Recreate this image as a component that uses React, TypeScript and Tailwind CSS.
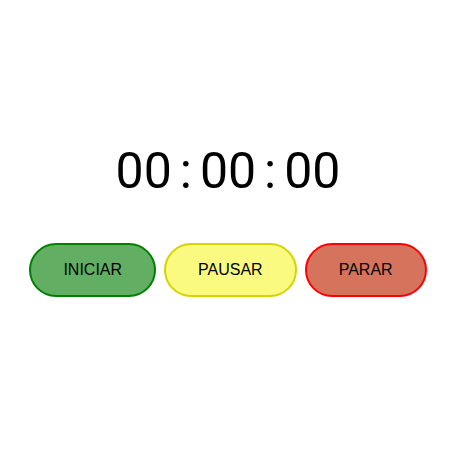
export default function App() {
  return (
    <div className="w-[450px] h-[450px] bg-white pt-[143px] pl-[6px]">
      <div
        className="flex justify-center gap-[8px] text-[50px] leading-[56px] text-black"
        style={{ fontFamily: 'Roboto, sans-serif' }}
      >
        <span>00</span>
        <span>:</span>
        <span>00</span>
        <span>:</span>
        <span>00</span>
      </div>
      <div
        className="mt-[44px] flex justify-center gap-[8px] text-[16px] leading-[18px] text-black"
        style={{ fontFamily: '"Liberation Sans", Arial, sans-serif' }}
      >
        <button className="rounded-full border-2 border-[#008000] bg-[#62ae62] px-[32px] py-[16px]">
          INICIAR
        </button>
        <button className="rounded-full border-2 border-[#d4d400] bg-[#fafa80] px-[32px] py-[16px]">
          PAUSAR
        </button>
        <button className="rounded-full border-2 border-[#ff0000] bg-[#d5735c] px-[32px] py-[16px]">
          PARAR
        </button>
      </div>
    </div>
  );
}
